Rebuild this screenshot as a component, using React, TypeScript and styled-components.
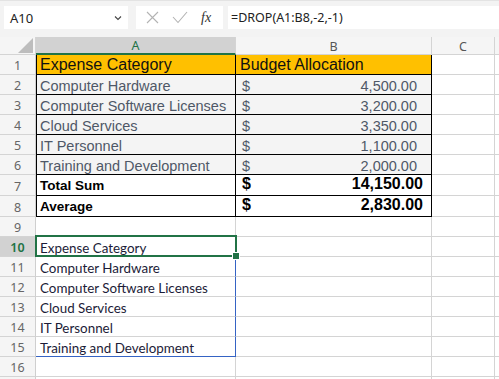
import styled, { createGlobalStyle, css } from 'styled-components';

const Global = createGlobalStyle`
  html, body {
    margin: 0;
    padding: 0;
    background: #f3f3f3;
    overflow: hidden;
  }
`;

const Page = styled.div`
  width: 499px;
  height: 379px;
  overflow: hidden;
  background: #f3f3f3;
  font-family: "Noto Sans", "Open Sans", sans-serif;
`;

const FormulaBar = styled.div`
  display: flex;
  align-items: stretch;
  height: 23px;
  padding: 5px 0 0 4px;
  gap: 8px;
  border-top: 1px solid #e3e3e3;
`;

const NameBox = styled.div`
  width: 124px;
  background: #fff;
  display: flex;
  align-items: center;
  justify-content: space-between;
  padding: 0 6px 0 6px;
  box-sizing: border-box;
  font-size: 13px;
  color: #222;
`;

const Chevron = styled.svg`
  width: 8px;
  height: 6px;
`;

const FxBox = styled.div`
  width: 87px;
  background: #fff;
  display: flex;
  align-items: center;
  gap: 13px;
  padding-left: 10px;
  box-sizing: border-box;
  margin-right: -3px;
`;

const Fx = styled.span`
  font-family: "Liberation Serif", serif;
  font-style: italic;
  font-size: 14px;
  color: #333;
`;

const Input = styled.div`
  flex: 1;
  background: #fff;
  display: flex;
  align-items: center;
  padding-left: 3px;
  font-size: 12.5px;
  color: #222;
`;

const Sheet = styled.div`
  margin-top: 8px;
  display: grid;
  grid-template-columns: 36px 200px 196px 63px 1fr;
  grid-template-rows: 18px repeat(6, 20px) 21px 21px repeat(9, 20px);
  background: #fff;
`;

const Corner = styled.div`
  background: #f5f5f5;
  border-right: 1px solid #d4d4d4;
  border-bottom: 1px solid #d4d4d4;
  box-sizing: border-box;
  display: flex;
  justify-content: flex-end;
  align-items: flex-end;
  padding: 0 2px 1px 0;
`;

const Triangle = styled.div`
  width: 0;
  height: 0;
  border-left: 15px solid transparent;
  border-bottom: 15px solid #bdbdbd;
`;

const ColHead = styled.div<{ $active?: boolean }>`
  box-sizing: border-box;
  display: flex;
  align-items: center;
  justify-content: center;
  font-size: 12.5px;
  border-right: 1px solid #d4d4d4;
  background: ${p => (p.$active ? '#d2d2d2' : '#f5f5f5')};
  color: ${p => (p.$active ? '#217346' : '#555')};
  border-bottom: ${p => (p.$active ? '2px solid #217346' : '1px solid #d4d4d4')};
  padding-top: 1px;
`;

const RowHead = styled.div<{ $active?: boolean }>`
  box-sizing: border-box;
  display: flex;
  align-items: center;
  justify-content: center;
  font-size: 12.5px;
  padding-top: 2px;
  border-right: 1px solid #cfcfcf;
  border-bottom: 1px solid #d4d4d4;
  background: ${p => (p.$active ? '#d2d2d2' : '#f5f5f5')};
  color: ${p => (p.$active ? '#217346' : '#666')};
  font-weight: ${p => (p.$active ? 600 : 400)};
`;

type Kind = 'head' | 'data' | 'total' | 'spill' | 'empty';

const Cell = styled.div<{ $kind?: Kind; $first?: boolean; $last?: boolean; $sel?: boolean }>`
  position: relative;
  box-sizing: border-box;
  display: flex;
  align-items: flex-end;
  white-space: nowrap;
  overflow: visible;
  border-right: 1px solid #d4d4d4;
  border-bottom: 1px solid #d4d4d4;
  padding: 0 3px 1px 4px;
  ${p =>
    p.$kind === 'head' &&
    css`
      background: #ffc000;
      border-right-color: #000;
      border-bottom-color: #000;
      font-family: "Liberation Sans", Arial, sans-serif;
      font-size: 16px;
      color: #111;
      padding-bottom: 0;
    `}
  ${p =>
    p.$kind === 'data' &&
    css`
      background: #f4f4f4;
      border-right-color: #000;
      border-bottom-color: #000;
      font-family: "Liberation Sans", Arial, sans-serif;
      font-size: 14.5px;
      color: #4f5867;
      padding-bottom: 0;
    `}
  ${p =>
    p.$kind === 'total' &&
    css`
      background: #fff;
      border-right-color: #000;
      border-bottom: 1.5px solid #000;
      font-family: "Liberation Sans", Arial, sans-serif;
      font-weight: 700;
      font-size: 13.5px;
      color: #000;
      padding-bottom: 2px;
    `}
  ${p =>
    p.$first &&
    css`
      border-left: 1px solid #000;
      padding-left: 3px;
    `}
  ${p =>
    p.$kind === 'spill' &&
    css`
      font-family: Lato, "Noto Sans", sans-serif;
      font-size: 13.4px;
      color: #1c1c38;
      border-right: 1px solid #3563c4;
      padding-bottom: 0;
    `}
  ${p =>
    p.$last &&
    css`
      border-bottom: 1px solid #3563c4;
    `}
  ${p =>
    p.$sel &&
    css`
      border-right-color: #d4d4d4;
      &::after {
        content: '';
        position: absolute;
        left: -1px;
        top: -2px;
        right: -2px;
        bottom: -1px;
        border: 2px solid #217346;
        pointer-events: none;
      }
    `}
`;

const Handle = styled.span`
  position: absolute;
  right: -5px;
  bottom: -4px;
  width: 6px;
  height: 6px;
  background: #217346;
  border: 1px solid #fff;
  z-index: 2;
`;

const Money = styled.div<{ $bold?: boolean }>`
  flex: 1;
  display: flex;
  justify-content: space-between;
  padding: 0 ${p => (p.$bold ? '5px' : '11px')} 0 2px;
  font-size: ${p => (p.$bold ? '16px' : '14.5px')};
`;

const table = [
  ['Computer Hardware', '4,500.00'],
  ['Computer Software Licenses', '3,200.00'],
  ['Cloud Services', '3,350.00'],
  ['IT Personnel', '1,100.00'],
  ['Training and Development', '2,000.00'],
];

const totals = [
  ['Total Sum', '14,150.00'],
  ['Average', '2,830.00'],
];

const spill = [
  'Expense Category',
  'Computer Hardware',
  'Computer Software Licenses',
  'Cloud Services',
  'IT Personnel',
  'Training and Development',
];

function Blank() {
  return (
    <>
      <Cell />
      <Cell />
    </>
  );
}

export default function App() {
  return (
    <Page>
      <Global />
      <FormulaBar>
        <NameBox>
          A10
          <Chevron viewBox="0 0 8 6">
            <path d="M1 1.5 L4 4.5 L7 1.5" fill="none" stroke="#444" strokeWidth="1.1" />
          </Chevron>
        </NameBox>
        <FxBox>
          <svg width="13" height="13" viewBox="0 0 13 13">
            <path d="M1 1 L12 12 M12 1 L1 12" stroke="#b3b3b3" strokeWidth="1.1" fill="none" />
          </svg>
          <svg width="16" height="13" viewBox="0 0 16 13">
            <path d="M1 6 L6 11.5 L15 1" stroke="#b3b3b3" strokeWidth="1.1" fill="none" />
          </svg>
          <Fx>fx</Fx>
        </FxBox>
        <Input>=DROP(A1:B8,-2,-1)</Input>
      </FormulaBar>

      <Sheet>
        <Corner>
          <Triangle />
        </Corner>
        <ColHead $active>A</ColHead>
        <ColHead>B</ColHead>
        <ColHead>C</ColHead>
        <ColHead />

        <RowHead>1</RowHead>
        <Cell $kind="head" $first>Expense Category</Cell>
        <Cell $kind="head">Budget Allocation</Cell>
        <Blank />

        {table.map(([name, amt], i) => (
          <>
            <RowHead key={'h' + i}>{i + 2}</RowHead>
            <Cell $kind="data" $first>{name}</Cell>
            <Cell $kind="data">
              <Money>
                <span>$</span>
                <span>{amt}</span>
              </Money>
            </Cell>
            <Blank />
          </>
        ))}

        {totals.map(([name, amt], i) => (
          <>
            <RowHead key={'t' + i}>{i + 7}</RowHead>
            <Cell $kind="total" $first>{name}</Cell>
            <Cell $kind="total">
              <Money $bold>
                <span>$</span>
                <span>{amt}</span>
              </Money>
            </Cell>
            <Blank />
          </>
        ))}

        <RowHead>9</RowHead>
        <Cell />
        <Cell />
        <Blank />

        {spill.map((text, i) => (
          <>
            <RowHead key={'s' + i} $active={i === 0}>{i + 10}</RowHead>
            <Cell $kind="spill" $sel={i === 0} $last={i === spill.length - 1}>
              {text}
              {i === 0 && <Handle />}
            </Cell>
            <Cell />
            <Blank />
          </>
        ))}

        <RowHead>16</RowHead>
        <Cell />
        <Cell />
        <Blank />
        <RowHead />
        <Cell />
        <Cell />
        <Blank />
      </Sheet>
    </Page>
  );
}
